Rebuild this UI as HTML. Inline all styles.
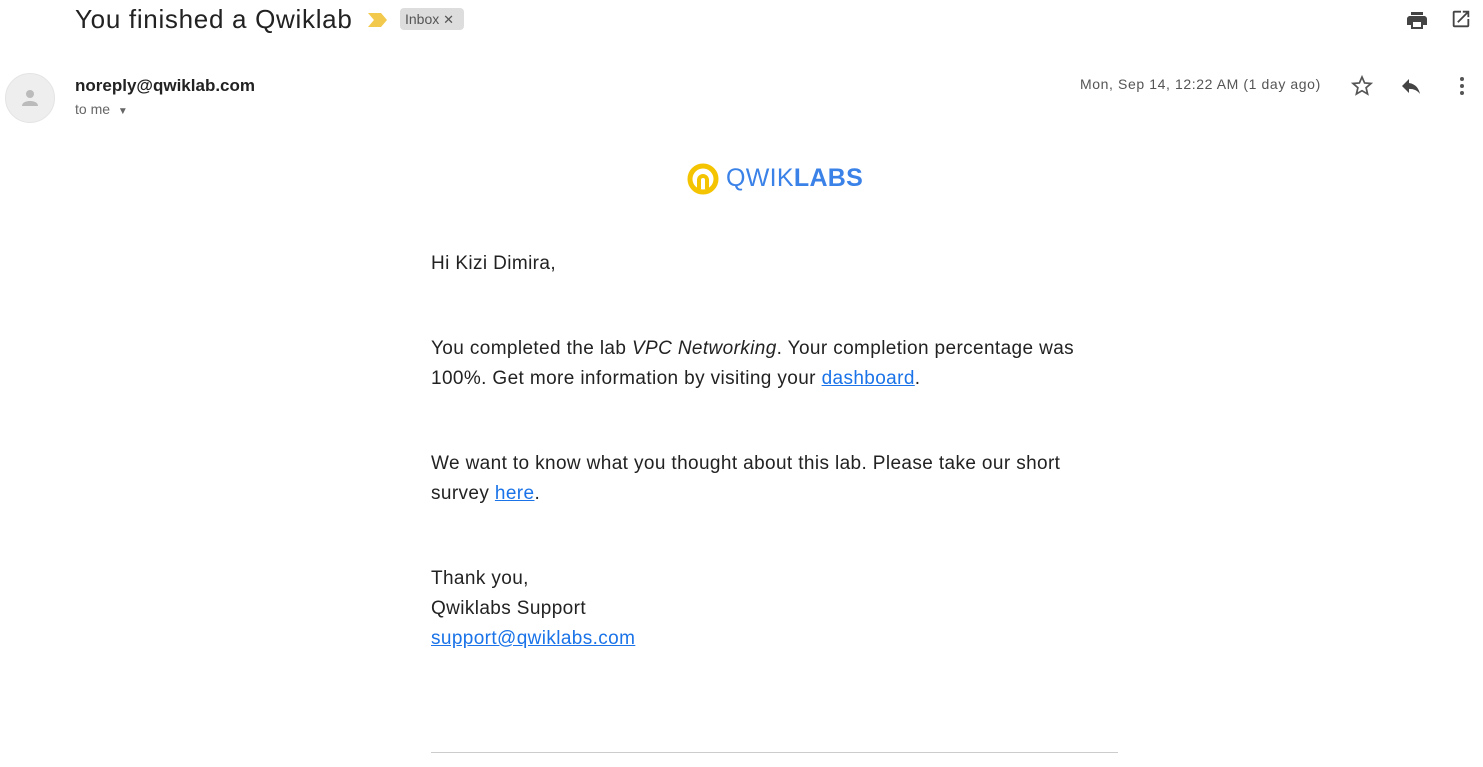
<!DOCTYPE html>
<html><head><meta charset="utf-8"><style>
body{margin:0;width:1483px;height:767px;background:#fff;font-family:"Liberation Sans",Arial,sans-serif;position:relative;overflow:hidden;color:#222}
.a{position:absolute;white-space:nowrap}
.p{font-size:19px;color:#222;left:431px;line-height:30px;letter-spacing:0.38px}
a{color:#1a73e8;text-decoration:underline}
</style></head><body>
<div class="a" style="left:75px;top:4px;font-size:26px;color:#222;letter-spacing:0.7px">You finished a Qwiklab</div>
<svg class="a" style="left:367px;top:12px" width="22" height="16"><path d="M1 1h13l6 7-6 7H1l6-7z" fill="#f2c94c"/></svg>
<div class="a" style="left:400px;top:8px;height:22px;width:64px;background:#ddd;border-radius:4px;font-size:14px;color:#555;line-height:22px;padding-left:5px;box-sizing:border-box">Inbox <span style="font-size:13px">✕</span></div>
<svg class="a" style="left:1405px;top:8px" width="24" height="24" viewBox="0 0 24 24"><path fill="#444" d="M19 8H5c-1.7 0-3 1.3-3 3v6h4v4h12v-4h4v-6c0-1.7-1.3-3-3-3zm-3 11H8v-5h8v5zm2-15H6v3h12z"/></svg>
<svg class="a" style="left:1450px;top:8px" width="22" height="22" viewBox="0 0 24 24"><path fill="#444" d="M19 19H5V5h7V3H5a2 2 0 0 0-2 2v14a2 2 0 0 0 2 2h14a2 2 0 0 0 2-2v-7h-2v7zM14 3v2h3.6l-9.8 9.8 1.4 1.4L19 6.4V10h2V3h-7z"/></svg>
<div class="a" style="left:5px;top:73px;width:50px;height:50px;border-radius:50%;background:#eee;border:1px solid #e4e4e4;box-sizing:border-box"></div>
<svg class="a" style="left:18px;top:86px" width="24" height="24" viewBox="0 0 24 24"><circle cx="12" cy="8" r="4" fill="#bbb"/><path d="M4 20c0-4 5-5 8-5s8 1 8 5z" fill="#bbb"/></svg>
<div class="a" style="left:75px;top:76px;font-size:17px;font-weight:bold;color:#222">noreply@qwiklab.com</div>
<div class="a" style="left:75px;top:101px;font-size:14px;color:#666">to me <span style="font-size:10px;margin-left:4px">▼</span></div>
<div class="a" style="left:1080px;top:76px;font-size:14px;color:#555;letter-spacing:0.6px">Mon, Sep 14, 12:22 AM (1 day ago)</div>
<svg class="a" style="left:1350px;top:74px" width="24" height="24" viewBox="0 0 24 24"><path fill="none" stroke="#555" stroke-width="1.7" d="M12 3l2.6 6 6.4.5-4.9 4.2 1.5 6.3L12 16.7 6.4 20l1.5-6.3L3 9.5 9.4 9z"/></svg>
<svg class="a" style="left:1399px;top:74px" width="24" height="24" viewBox="0 0 24 24"><path fill="#444" d="M10 9V5l-7 7 7 7v-4.1c5 0 8.5 1.6 11 5.1-1-5-4-10-11-11z"/></svg>
<svg class="a" style="left:1450px;top:74px" width="24" height="24" viewBox="0 0 24 24"><circle cx="12" cy="5" r="2" fill="#555"/><circle cx="12" cy="12" r="2" fill="#555"/><circle cx="12" cy="19" r="2" fill="#555"/></svg>
<svg class="a" style="left:686px;top:162px" width="34" height="34" viewBox="0 0 34 34"><circle cx="17" cy="17" r="13" fill="none" stroke="#f5c400" stroke-width="5"/><path d="M13 27v-9a4 4 0 0 1 8 0v9" fill="none" stroke="#f5c400" stroke-width="4"/></svg>
<div class="a" style="left:726px;top:164px;font-size:25px;color:#3b82e8;letter-spacing:0.3px">QWIK<b>LABS</b></div>
<div class="a p" style="top:249px">Hi Kizi Dimira,</div>
<div class="a p" style="top:334px">You completed the lab <i>VPC Networking</i>. Your completion percentage was<br>100%. Get more information by visiting your <a>dashboard</a>.</div>
<div class="a p" style="top:449px">We want to know what you thought about this lab. Please take our short<br>survey <a>here</a>.</div>
<div class="a p" style="top:564px">Thank you,<br>Qwiklabs Support<br><a>support@qwiklabs.com</a></div>
<div class="a" style="left:431px;top:752px;width:687px;height:1px;background:#ccc"></div>
</body></html>
